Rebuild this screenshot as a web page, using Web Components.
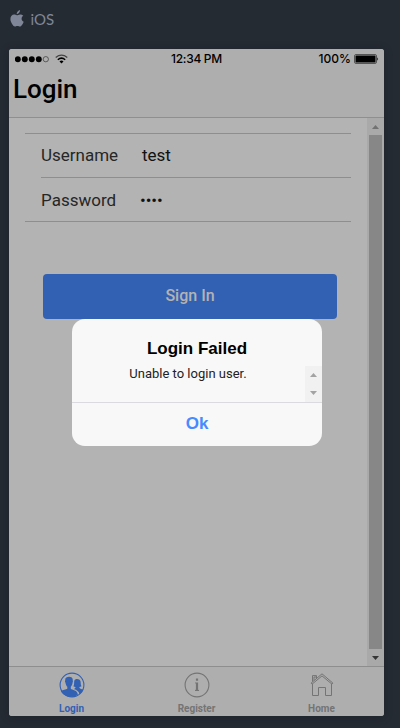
<!DOCTYPE html>
<html lang="en"><head><meta charset="utf-8"><title>Login</title>
<style>html,body{margin:0;height:728px;overflow:hidden;background:#252b33;font-family:Roboto,sans-serif}</style></head>
<body>
<preview-shell>
  <ios-header slot="header">Login</ios-header>
  <scroll-page slot="page">
    <input-list>
      <input-row label="Username">test</input-row>
      <input-row label="Password" secret>••••</input-row>
    </input-list>
    <ion-like-button>Sign In</ion-like-button>
  </scroll-page>
  <tab-bar slot="tabs">
    <tab-item icon="people" active>Login</tab-item>
    <tab-item icon="info">Register</tab-item>
    <tab-item icon="home">Home</tab-item>
  </tab-bar>
  <alert-box slot="overlay" heading="Login Failed" action="Ok">Unable to login user.</alert-box>
</preview-shell>
<script>
const define=(name,html)=>customElements.define(name,class extends HTMLElement{
  constructor(){super();this.attachShadow({mode:'open'}).innerHTML=typeof html==='function'?html(this):html;}
});

define('preview-shell',`<style>
:host{display:block;box-sizing:border-box;height:728px;width:400px;padding:0 16px 0 9px;background:#252b33}
.bar{height:49px;display:flex;align-items:flex-start;color:#7f8697}
.bar svg{margin:10px 0 0 1px}
.bar span{font:15px/19px Lato,sans-serif;margin:10px 0 0 6.500px}
.device{position:relative;width:375px;height:667px;border-radius:3px;overflow:hidden;background:#b3b3b3;display:flex;flex-direction:column;box-shadow:0 1px 9px rgba(10,14,25,.28)}
</style>
<div class="bar"><svg width="14" height="17" viewBox="0 0 14 17" fill="#7f8697"><path d="M9.900.1c.2 1.200-.3 2.200-1 3-.6.7-1.400 1.100-2.200 1.100-.1-1.100.4-2.100 1-2.800C8.300.700 9.200.200 9.900.100zM13.300 5.800c-1.100.7-1.700 1.600-1.700 2.900 0 1.400.8 2.500 2.100 3-.4 1.200-1 2.300-1.700 3.200-.6.8-1.200 1.500-2.100 1.500-.9 0-1.300-.5-2.500-.5s-1.600.5-2.500.5c-.9 0-1.600-.8-2.300-1.700C1.200 12.900.4 10.800.4 9c0-2.900 1.800-4.500 3.700-4.500 1.100 0 2 .7 2.800.7.700 0 1.800-.8 3.100-.8 1.300 0 2.500.5 3.300 1.400z"/></svg><span>iOS</span></div>
<div class="device"><slot name="header"></slot><slot name="page"></slot><slot name="tabs"></slot><slot name="overlay"></slot></div>`);

define('ios-header',`<style>
:host{display:block;box-sizing:border-box;height:69px;border-bottom:1px solid #8f8f8f;background:#aeaeae;color:#000}
.status{display:grid;grid-template-columns:1fr 1fr 1fr;height:20px;font:500 12px/20px Inter,sans-serif}
.l,.r{display:flex;align-items:center}.l{padding-left:6px}.r{justify-content:flex-end;padding-right:5px;gap:3px}
.c{text-align:center}
h1{font:500 26px/30px Roboto,sans-serif;letter-spacing:-.05px;margin:5px 0 0 4px}
.t{letter-spacing:-.3px}
</style>
<div class="status"><div class="l"><svg width="55" height="12" viewBox="0 0 55 12"><g><circle cx="2.800" cy="6.200" r="2.950"/><circle cx="9.800" cy="6.200" r="2.950"/><circle cx="16.800" cy="6.200" r="2.950"/><circle cx="23.800" cy="6.200" r="2.950"/><circle cx="30.800" cy="6.200" r="2.650" fill="none" stroke="#222" stroke-width=".6"/></g><g fill="none" stroke="#000" stroke-width="1.500"><path d="M40.700 4.500Q46.500-.1 52.300 4.500" stroke="#444" stroke-width="1.300"/><path d="M42.800 6.700Q46.500 3.500 50.200 6.700"/></g><path d="M44.500 8.400Q46.500 6.700 48.500 8.400L46.500 10.500z"/></svg></div><div class="c"><span class="t">12:34 PM</span></div><div class="r"><span>100%</span><svg width="25" height="10" viewBox="0 0 25 10"><rect x=".5" y=".5" width="22" height="9" rx="1.500" fill="none" stroke="#555"/><rect x="1.500" y="1.500" width="20" height="7" rx=".6"/><path d="M23.300 3.200Q25 5 23.300 6.800z"/></svg></div></div>
<h1><slot></slot></h1>`);

define('scroll-page',`<style>
:host{flex:1;min-height:0;display:grid;grid-template-columns:358px 17px;background:#b3b3b3}
.track{background:#a9a9a9;display:grid;grid-template-rows:17px 514px 17px;justify-items:center;align-items:center}
.thumb{width:13px;height:514px;background:#878787}
.main{padding:15px 16px 0}
svg{display:block}
</style><div class="main"><slot></slot></div>
<div class="track"><svg width="7" height="4"><path d="M0 4L3.500 0L7 4z" fill="#727272"/></svg><div class="thumb"></div><svg width="7" height="4"><path d="M0 0L3.500 4L7 0z" fill="#353535"/></svg></div>`);

define('input-list',`<style>:host{display:block;box-sizing:border-box;height:89px;border-top:1px solid #8e8e8e;border-bottom:1px solid #8e8e8e}</style><slot></slot>`);

define('input-row',e=>`<style>
:host{display:flex;box-sizing:border-box;height:44px;margin-left:16px;font:17px/44px Roboto,sans-serif;color:#111}
:host(:first-child){border-bottom:1px solid #8e8e8e;line-height:42px}
label{width:101px;color:#262626}
:host([secret]) span{margin-left:-2px;letter-spacing:-.1px}
</style><label>${e.getAttribute('label')}</label><span><slot></slot></span>`);

define('ion-like-button',`<style>
:host{display:block;margin:52px 14px 0 18px;height:45px}
button{display:block;width:100%;height:45px;padding:0 0 1px;border:0;border-radius:4px;background:#3261b3;color:#b3b3b3;font:500 16px/44px Roboto,sans-serif}
</style><button><slot></slot></button>`);

define('tab-bar',`<style>:host{display:grid;grid-template-columns:repeat(3,1fr);box-sizing:border-box;height:50px;border-top:1px solid #8e8e8e;background:#aeaeae}</style><slot></slot>`);

const icons={
people:`<svg width="26" height="26" viewBox="0 0 26 26"><circle cx="13" cy="13" r="11.900" fill="none" stroke="currentColor" stroke-width="1.100"/><path fill="currentColor" d="M2 19.200C3.600 17.700 7.300 17.700 8.300 16.700V14.800C7.200 13.500 6.700 12 6.400 10.400C5.500 9.300 6.300 8.400 6.300 8C5.900 6 7.700 4.700 10.100 4.700C12.500 4.700 14 6 13.700 8C13.700 8.700 14.300 9.300 13.600 10.400C13.400 12 12.700 13.800 11.800 14.800V16.700C13.100 18 18.500 17.800 18.900 22.700C11.900 27 4.400 24.300 2 19.200z"/><path fill="currentColor" d="M14.700 17C15.900 16.600 16.500 16.100 16.500 14.900C15.700 14.800 15 14.600 14.400 14.200C15.500 12.600 14.900 10.300 15.300 8.700C15.800 6.400 20.700 6.200 21.500 9.300C22 11.300 21.400 12.800 22.500 14.300C21.700 14.800 20.900 14.900 20.400 15C20.100 16.500 22.700 17.300 24.200 17.500C23.500 19.400 22.100 21.200 20.400 22.300C20.200 19.400 17.700 17.900 14.700 17z"/></svg>`,
info:`<svg width="26" height="26" viewBox="0 0 26 26"><circle cx="13" cy="13" r="11.900" fill="none" stroke="currentColor" stroke-width="1.100"/><path fill="currentColor" d="M11.900 6.500h2.200v2.200h-2.200zM11 10.500h3.100v7.300l.9.300v.8h-4v-.8l.9-.3v-6.300l-.9-.3z"/></svg>`,
home:`<svg width="26" height="26" viewBox="0 0 26 26" fill="none" stroke="currentColor" stroke-width="1"><path d="M2.100 11.100L13 1.800L23.900 11.100M2.100 11.100L3 12.200L13 3.900L23 12.200L23.900 11.100M3.500 9.600V3.600H7.500V6.200M5 8.400V5H7.500M3.500 12V23.500H9.500V15.500H16.500V23.500H22.500V12"/></svg>`};
define('tab-item',e=>`<style>
:host{display:flex;flex-direction:column;align-items:center;color:#747474;padding-top:5px;font:700 10px/12px Roboto,sans-serif}
:host([active]){color:#3261b3}
svg{display:block}.label{margin-top:5px}
</style>${icons[e.getAttribute('icon')]}<div class="label"><slot></slot></div>`);

define('alert-box',e=>`<style>
:host{position:absolute;left:63px;top:270px;width:250px;height:127px;border-radius:13px;background:#f8f8f8;overflow:hidden;color:#000;display:flex;flex-direction:column}
h2{margin:0;height:47px;box-sizing:border-box;padding-top:20px;text-align:center;font:700 17px/20px "Liberation Sans",sans-serif}
.msg{height:36px;display:grid;grid-template-columns:1fr 17px}
.copy{font:13px/15px Roboto,sans-serif;text-align:center;color:#222;padding-right:1px}
.bar{background:#f1f1f1;display:flex;flex-direction:column;align-items:center;justify-content:space-between;padding:7px 0;box-sizing:border-box}
button{height:44px;border:0;border-top:1px solid #dbdbdf;background:transparent;color:#488aff;font:700 17px/41px "Liberation Sans",sans-serif;padding:0 0 2px}
</style><h2>${e.getAttribute('heading')}</h2><div class="msg"><div class="copy"><slot></slot></div><div class="bar"><svg width="7" height="4"><path d="M0 4L3.500 0L7 4z" fill="#a3a3a3"/></svg><svg width="7" height="4"><path d="M0 0L3.500 4L7 0z" fill="#a3a3a3"/></svg></div></div><button>${e.getAttribute('action')}</button>`);
</script>
</body></html>
